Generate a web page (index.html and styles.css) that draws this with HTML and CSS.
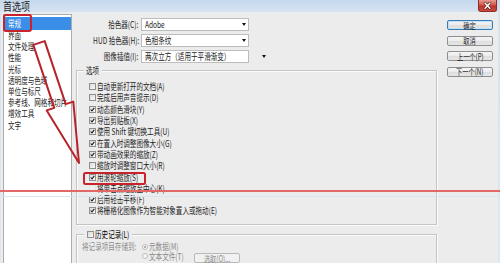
FILE: index.html
```html
<!DOCTYPE html>
<html lang="zh-CN">
<head>
<meta charset="utf-8">
<title>首选项</title>
<link rel="stylesheet" href="styles.css">
</head>
<body>
<div class="window">
  <header class="titlebar">
    <span class="title">首选项</span>
    <span class="close"><svg viewBox="0 0 18 11" width="18" height="11"><path d="M6.5 3 11.5 8.5M11.5 3 6.5 8.5" stroke="#5a1a14" stroke-width="3" stroke-linecap="round"/><path d="M6.5 3 11.5 8.5M11.5 3 6.5 8.5" stroke="#fff" stroke-width="1.6" stroke-linecap="round"/></svg></span>
  </header>
  <div class="frame">
    <ul class="nav">
      <li class="sel"><span class="t">常规</span></li>
      <li><span class="t">界面</span></li>
      <li><span class="t">文件处理</span></li>
      <li><span class="t">性能</span></li>
      <li><span class="t">光标</span></li>
      <li><span class="t">透明度与色域</span></li>
      <li><span class="t">单位与标尺</span></li>
      <li><span class="t">参考线、网格和切片</span></li>
      <li><span class="t">增效工具</span></li>
      <li><span class="t">文字</span></li>
    </ul>
    <main class="content">
      <div class="form">
        <div class="frow"><label class="flabel"><span class="t tr">拾色器(C):</span></label><div class="select"><span class="t">Adobe</span><i class="caret"></i></div></div>
        <div class="frow"><label class="flabel"><span class="t tr">HUD 拾色器(H):</span></label><div class="select"><span class="t">色相条纹</span><i class="caret"></i></div></div>
        <div class="frow"><label class="flabel"><span class="t tr">图像插值(I):</span></label><div class="select"><span class="t">两次立方（适用于平滑渐变）</span><i class="caret"></i></div></div>
      </div>
      <section class="group opts">
        <div class="legend"><span class="t">选项</span></div>
        <div class="check"><span class="cb"></span><span class="t">自动更新打开的文档(A)</span></div>
        <div class="check"><span class="cb"></span><span class="t">完成后用声音提示(D)</span></div>
        <div class="check"><span class="cb"><svg viewBox="0 0 5 5"><path d="M.7 2.5 2 3.9 4.3 .9"/></svg></span><span class="t">动态颜色滑块(Y)</span></div>
        <div class="check"><span class="cb"><svg viewBox="0 0 5 5"><path d="M.7 2.5 2 3.9 4.3 .9"/></svg></span><span class="t">导出剪贴板(X)</span></div>
        <div class="check"><span class="cb"><svg viewBox="0 0 5 5"><path d="M.7 2.5 2 3.9 4.3 .9"/></svg></span><span class="t">使用 Shift 键切换工具(U)</span></div>
        <div class="check"><span class="cb"><svg viewBox="0 0 5 5"><path d="M.7 2.5 2 3.9 4.3 .9"/></svg></span><span class="t">在置入时调整图像大小(G)</span></div>
        <div class="check"><span class="cb"><svg viewBox="0 0 5 5"><path d="M.7 2.5 2 3.9 4.3 .9"/></svg></span><span class="t">带动画效果的缩放(Z)</span></div>
        <div class="check"><span class="cb"></span><span class="t">缩放时调整窗口大小(R)</span></div>
        <div class="check"><span class="cb"><svg viewBox="0 0 5 5"><path d="M.7 2.5 2 3.9 4.3 .9"/></svg></span><span class="t">用滚轮缩放(S)</span></div>
        <div class="check"><span class="cb faint"></span><span class="t">将单击点缩放至中心(K)</span></div>
        <div class="check"><span class="cb"><svg viewBox="0 0 5 5"><path d="M.7 2.5 2 3.9 4.3 .9"/></svg></span><span class="t">启用轻击平移(F)</span></div>
        <div class="check"><span class="cb"><svg viewBox="0 0 5 5"><path d="M.7 2.5 2 3.9 4.3 .9"/></svg></span><span class="t">将栅格化图像作为智能对象置入或拖动(E)</span></div>
      </section>
      <section class="group hist">
        <div class="legend"><span class="cb"></span><span class="t strong">历史记录(L)</span></div>
        <div class="hrow">
          <span class="hlabel"><span class="t">将记录项目存储到:</span></span>
          <span class="radio on"></span><span class="t dim">元数据(M)</span>
        </div>
        <div class="hrow second">
          <span class="radio"></span><span class="rlabel"><span class="t dim">文本文件(T)</span></span>
          <span class="btn small"><span class="t tc dim">选取(O)...</span></span>
        </div>
      </section>
    </main>
    <div class="buttons">
      <span class="btn default"><span class="t tc">确定</span></span>
      <span class="btn"><span class="t tc">取消</span></span>
      <span class="btn"><span class="t tc">上一个(P)</span></span>
      <span class="btn"><span class="t tc">下一个(N)</span></span>
    </div>
  </div>
  <svg class="annot" viewBox="0 0 500 263" width="500" height="263">
    <line x1="0" y1="196.5" x2="500" y2="196.5" stroke="#dbe5f0" stroke-width="1"/>
    <line x1="0" y1="191" x2="500" y2="191" stroke="#e26868" stroke-width="2"/>
    <rect x="4" y="15" width="27" height="16" rx="2" fill="none" stroke="#c8232b" stroke-width="2"/>
    <rect x="84" y="173" width="61" height="11" rx="1.5" fill="none" stroke="#c8232b" stroke-width="2"/>
    <polygon points="33.3,44.9 44.7,41.1 65.7,104.1 73.3,101.6 79,163 46.7,110.4 54.3,107.9" fill="none" stroke="#b8232a" stroke-width="2" stroke-linejoin="round"/>
  </svg>
</div>
</body>
</html>
```
FILE: styles.css
```css
* { box-sizing: border-box; margin: 0; padding: 0; }
html, body { width: 500px; height: 263px; overflow: hidden; }
body {
  font-family: "Noto Sans CJK SC", "Noto Sans", sans-serif;
  font-size: 9px;
  color: #1b1b1b;
  background: #ececec;
}
.window {
  position: relative;
  width: 500px;
  height: 263px;
  display: flex;
  flex-direction: column;
  background: linear-gradient(#c6d8ed, #d6e3f2 12px, #dde7f2);
}
.t {
  display: inline-block;
  white-space: nowrap;
  transform: scaleX(.73);
  transform-origin: 0 50%;
}
.t.tr { transform-origin: 100% 50%; }
.t.tc { transform-origin: 50% 50%; }

/* title bar */
.titlebar {
  height: 12px;
  flex: none;
  display: flex;
  align-items: flex-start;
  justify-content: space-between;
  padding-left: 3px;
}
.title {
  display: inline-block;
  font-size: 11px;
  line-height: 12px;
  color: #1e1e1e;
  transform: scaleX(.82);
  transform-origin: 0 50%;
}
.close {
  width: 19px;
  height: 12px;
  margin-right: 3px;
  display: flex;
  align-items: center;
  justify-content: center;
  background: linear-gradient(#e79a8f, #d0594c 45%, #b9352a 55%, #c94c3e);
  border: 1px solid #8d2c24;
  border-top: none;
  border-radius: 0 0 3px 3px;
}

/* main frame */
.frame {
  flex: 1;
  display: flex;
  align-items: stretch;
  margin: 0 2px 0 1px;
  padding-left: 2px;
  background: #ececec;
  overflow: hidden;
}
.nav {
  list-style: none;
  width: 69px;
  flex: none;
  margin-top: 2px;
  padding: 2px 0 0 1px;
  background: #fff;
  border: 1px solid #acacac;
  border-bottom: none;
}
.nav li {
  height: 11.2px;
  line-height: 11.2px;
  padding-left: 3px;
  color: #1e1e1e;
}
.nav li.sel {
  height: 13px;
  line-height: 13px;
  background: #3b8ee8;
  color: #fff;
}

.content {
  width: 361px;
  flex: none;
  margin-left: 4px;
}
.form {
  margin-top: 6px;
  display: flex;
  flex-direction: column;
  gap: 3px;
}
.frow {
  height: 13px;
  display: flex;
  align-items: center;
}
.flabel {
  width: 62px;
  text-align: right;
  line-height: 13px;
  color: #1e1e1e;
}
.select {
  width: 108px;
  height: 13px;
  margin-left: 3px;
  padding: 0 2px 0 3px;
  display: flex;
  align-items: center;
  justify-content: space-between;
  background: #fff;
  border: 1px solid #bcbcbc;
  line-height: 11px;
}
.caret {
  flex: none;
  width: 0;
  height: 0;
  border-left: 2.5px solid transparent;
  border-right: 2.5px solid transparent;
  border-top: 3px solid #111;
}

/* group boxes */
.group {
  border: 1px solid #c4c4c4;
  box-shadow: inset 1px 1px 0 #fbfbfb, 1px 1px 0 #fbfbfb;
}
.legend {
  height: 11px;
  line-height: 11px;
  margin-top: -6px;
  background: #ececec;
  display: flex;
  align-items: center;
}
.opts {
  margin-top: 7px;
  height: 155px;
  padding-left: 12px;
}
.opts .legend {
  width: 18px;
  margin-left: -5px;
  margin-bottom: 5px;
  padding-left: 2px;
}
.check {
  height: 11.3px;
  display: flex;
  align-items: center;
  color: #1e1e1e;
}
.cb {
  flex: none;
  width: 7px;
  height: 7px;
  margin-right: 1px;
  border: 1px solid #8f9090;
  background: linear-gradient(135deg, #d9d9d9, #fbfbfb);
  display: flex;
}
.cb svg {
  width: 5px;
  height: 5px;
  fill: none;
  stroke: #1d1d1d;
  stroke-width: 1.1;
}
.cb.faint { border-color: #e4e4e4; background: #f0f0f0; }

.hist {
  margin-top: 9px;
  height: 45px;
  padding-left: 5px;
}
.hist .legend {
  width: 48px;
  margin-left: 2px;
  padding-left: 3px;
}
.hist .legend .cb { margin-right: 1px; }
.strong { color: #000; }
.hrow {
  height: 9.5px;
  display: flex;
  align-items: center;
  margin-top: 2px;
  color: #8c8c8c;
}
.hrow.second { margin-top: 0; padding-left: 60px; }
.hlabel { width: 60px; flex: none; }
.dim { color: #8a8a8a; }
.radio {
  flex: none;
  width: 6px;
  height: 6px;
  margin-right: 1px;
  border-radius: 50%;
  border: 1px solid #bdbdbd;
  background: #f6f6f6;
  display: flex;
  align-items: center;
  justify-content: center;
}
.radio.on::after {
  content: "";
  width: 2px;
  height: 2px;
  border-radius: 50%;
  background: #9a9a9a;
}
.rlabel { width: 45px; flex: none; }

/* buttons */
.buttons {
  width: 46px;
  flex: none;
  margin: 8px 0 0 10px;
  display: flex;
  flex-direction: column;
  gap: 5.67px;
}
.btn {
  width: 46px;
  height: 10px;
  display: flex;
  align-items: center;
  justify-content: center;
  line-height: 9px;
  font-size: 8.5px;
  color: #1e1e1e;
  border: 1px solid #8f8f8f;
  border-radius: 2px;
  background: linear-gradient(#f5f5f5, #ececec 50%, #dedede 51%, #e6e6e6);
}
.btn.default {
  border-color: #3a7cb4;
  box-shadow: inset 0 0 0 1px #bfe2f7;
}
.btn.small {
  flex: none;
  align-self: flex-start;
  margin-top: 1.5px;
  border-color: #b9b9b9;
  background: #f1f1f1;
}

.annot {
  position: absolute;
  left: 0;
  top: 0;
  pointer-events: none;
}
```
